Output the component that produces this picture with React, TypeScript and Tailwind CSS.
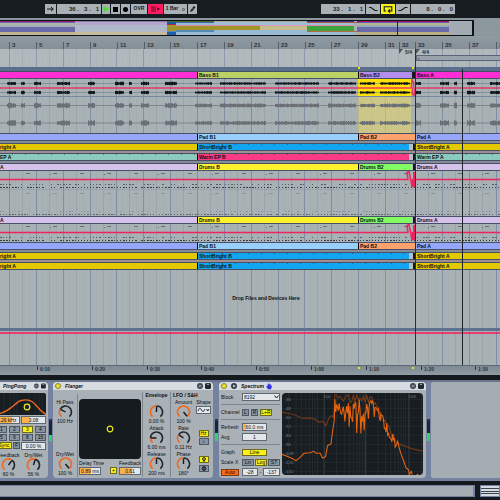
import React from 'react';

const INK = '#11161b';
const HOT = '#f0235f';

interface ClipData {
  name?: string;
  span: number;
  color: string;
  notes?: boolean;
}

// Small seeded generator so the drawn audio is stable between renders
const seeded = (seed: number) => {
  let s = seed;
  return () => {
    s = (s * 16807) % 2147483647;
    return s / 2147483647;
  };
};

/* ---------- Transport ---------- */

const barButton = 'h-2.5 flex items-center justify-center bg-[#a9b1b6] text-[#11161b]';
const barField = 'h-2.5 w-11 bg-[#a9b1b6] text-[#20272c] text-[6px] leading-[10px] font-bold text-right pr-0.5 outline-none';

const Transport: React.FC = () => (
  <header className="flex justify-between bg-[#171c20] px-[45px] pt-1 pb-1">
    <div className="flex gap-px">
      <button aria-label="Follow" className={`${barButton} w-[11px]`}>
        <svg viewBox="0 0 11 10" className="w-[11px] h-2.5" fill="none" stroke={INK}>
          <path d="M2 5h6M6 3l2.3 2L6 7" />
        </svg>
      </button>
      <input aria-label="Song position" className={barField} defaultValue="36 .   3 .   1" />
      <button aria-label="Play" className={`${barButton} w-2`}>
        <svg viewBox="0 0 8 10" className="w-2 h-2.5"><path d="M1.5 2l6 3-6 3z" fill="#46e02c" /></svg>
      </button>
      <button aria-label="Stop" className={`${barButton} w-[9px]`}>
        <span className="w-[5px] h-[5px] bg-black" />
      </button>
      <button aria-label="Record" className={`${barButton} w-[9px]`}>
        <span className="w-[5px] h-[5px] rounded-full bg-black" />
      </button>
      <button className={`${barButton} w-4 text-[5px] font-bold`}>OVR</button>
      <button aria-label="Back to arrangement" className="h-2.5 w-[15px] bg-[#ff1d62]">
        <svg viewBox="0 0 15 10" className="w-[15px] h-2.5">
          <path d="M3 3h5M3 5h5M3 7h5" stroke="#5d0b27" />
          <path d="M9 3.2l3.4 1.8L9 6.8z" fill="#5d0b27" />
        </svg>
      </button>
      <button className={`${barButton} w-[23px] gap-1 text-[5px] font-bold`}>
        1 Bar
        <span className="w-[3px] h-[3px] rounded-full border border-[#4a5258]" />
      </button>
      <button aria-label="Draw" className={`${barButton} w-[9px]`}>
        <svg viewBox="0 0 9 10" className="w-[9px] h-2.5">
          <path d="M2 8l1-2.5L6 2l1.5 1.3L4.5 7z" fill={INK} />
          <path d="M3.8 5.8L5.6 3.8" stroke="#a9b1b6" strokeWidth=".6" />
        </svg>
      </button>
    </div>
    <div className="flex gap-px">
      <input aria-label="Loop start" className={barField} defaultValue="33 .   1 .   1" />
      <button aria-label="Punch in" className={`${barButton} w-3.5`}>
        <svg viewBox="0 0 14 10" className="w-3.5 h-2.5" fill="none" stroke={INK} strokeWidth="1.2">
          <path d="M3 3.5h2l4 3h2.5" />
        </svg>
      </button>
      <button aria-label="Loop" className="h-2.5 w-3.5 bg-[#f8f01c]">
        <svg viewBox="0 0 14 10" className="w-3.5 h-2.5" fill="none" stroke={INK} strokeWidth="1.1">
          <path d="M5 7H3.2V2.8h7.6V7H7.5M9 5.4L7.3 7 9 8.6" />
        </svg>
      </button>
      <button aria-label="Punch out" className={`${barButton} w-3.5`}>
        <svg viewBox="0 0 14 10" className="w-3.5 h-2.5" fill="none" stroke={INK} strokeWidth="1.2">
          <path d="M2.5 6.5h2.5l4-3h2.5" />
        </svg>
      </button>
      <input aria-label="Loop length" className={barField} defaultValue="8 .   0 .   0" />
    </div>
  </header>
);

/* ---------- Overview ---------- */

const overview: { span: number; bands: [number, string][] }[] = [
  { span: 75, bands: [[1, '#8e1f6c'], [1, '#6c65b4'], [2, '#b3b69f'], [2, '#9fb1bb'], [4, '#6a69aa'], [3, '#c1b78f']] },
  { span: 93, bands: [[1, '#8a76a6'], [3, '#b5a6cb'], [6, '#b0b8c9'], [3, '#c4bb9b']] },
  { span: 9, bands: [[1, '#4b6a2e'], [2, '#195ca8'], [1, '#b4224c'], [2, '#a3992f'], [3, '#a39427'], [1, '#5d8bb5'], [3, '#1d5fae']] },
  { span: 38, bands: [[1, '#4b6a2e'], [1, '#3f6aa0'], [2, '#97bbd8'], [1, '#d68ba4'], [3, '#a39427'], [2, '#5687b7'], [3, '#9cbbd6']] },
  { span: 46, bands: [[1, '#a5ad8f'], [3, '#a0bed8'], [1, '#d68ba4'], [3, '#a39427'], [2, '#98b9d4'], [3, '#9cbbd6']] },
  { span: 47, bands: [[1, '#a5ad8f'], [3, '#a0bed8'], [1, '#dd9cae'], [3, '#c5bd8c'], [2, '#98b9d4'], [3, '#9cbbd6']] },
  { span: 47, bands: [[1, '#4b2f8e'], [1, '#a25a43'], [2, '#a0bed8'], [1, '#dd8ca4'], [4, '#3fa33c'], [1, '#b46b45'], [3, '#9cbbd6']] },
  { span: 3, bands: [[1, '#a9b1b6'], [1, '#a25a43'], [7, '#a9b1b6'], [1, '#b46b45'], [3, '#a9b1b6']] },
  { span: 93, bands: [[1, '#a01368'], [1, '#5e5bb0'], [2, '#b9b48f'], [2, '#93aeb0'], [4, '#6a69aa'], [3, '#b9ad82']] },
  { span: 23, bands: [[1, '#a2abb1']] },
];

const Overview: React.FC = () => (
  <div className="flex bg-[#8d989e] pt-0.5">
    <div className="relative flex grow-[474] basis-0 h-4 border-y border-r-2 border-[#0e1216]">
      {overview.map((part, i) => (
        <div key={i} className="flex flex-col min-w-0" style={{ flex: `${part.span} 1 0px` }}>
          {part.bands.map(([size, color], j) => (
            <span key={j} style={{ flex: `${size} 1 0px`, background: color }} />
          ))}
        </div>
      ))}
      <span className="absolute inset-y-0 left-[84%] w-px bg-[#23282e]" />
    </div>
    <div className="grow-[26] basis-0" />
  </div>
);

/* ---------- Rulers ---------- */

const bars: [string, number][] = [
  ['', 9], ['3', 27], ['5', 27], ['7', 27], ['9', 27], ['11', 27], ['13', 26], ['15', 27],
  ['17', 27], ['19', 27], ['21', 27], ['23', 27], ['25', 26], ['27', 27], ['29', 27],
  ['31', 14], ['32', 16], ['33', 27], ['35', 27], ['37', 27], ['39', 4],
];

const BarRuler: React.FC = () => (
  <div className="flex items-end h-[13px] bg-gradient-to-b from-[#909aa1] to-[#848f98] text-[6px] leading-[6px] font-bold text-[#2b333b]">
    {bars.map(([label, span]) => (
      <div key={span + label} className="min-w-0 overflow-hidden whitespace-nowrap" style={{ flex: `${span} 1 0px` }}>
        <span className={`block h-[7px] pl-0.5 ${label ? 'border-l border-[#525e70]' : ''}`}>{label}</span>
      </div>
    ))}
  </div>
);

const times: [string, number][] = [
  ['', 37], ['0:10', 55], ['0:20', 55], ['0:30', 54], ['0:40', 55], ['0:50', 55],
  ['1:00', 55], ['1:10', 55], ['1:20', 54], ['1:30', 25],
];

const TimeRuler: React.FC = () => (
  <div className="relative flex h-2.5 border-t border-[#5d6a76] bg-gradient-to-b from-[#7f8b94] to-[#8f9aa2] text-[5px] leading-[7px] font-bold text-[#2b333b]">
    {times.map(([label, span]) => (
      <div key={label} className="min-w-0 overflow-hidden" style={{ flex: `${span} 1 0px` }}>
        <span className={label ? 'block h-1 border-l border-[#323b45] pl-0.5' : ''}>{label}</span>
      </div>
    ))}
    <span className="absolute top-px left-[71.6%] w-0.5 h-0.5 bg-[#f3e500]" />
    <span className="absolute top-px left-[82.4%] w-0.5 h-0.5 bg-[#f3e500]" />
  </div>
);

/* ---------- Arrangement ---------- */

const majors = [
  ...Array.from({ length: 15 }, (_, i) => 9.5 + Math.round(i * 26.85)),
  415.5, 442.5, 469.5, 496.5,
];

const Grid: React.FC = () => (
  <svg className="absolute inset-0 w-full h-full" viewBox="0 0 500 100" preserveAspectRatio="none">
    {majors.map((x) => (
      <g key={x}>
        <path d={`M${x} 0V100`} stroke="#7482a0" strokeOpacity=".75" />
        <path d={`M${x + 13} 0V100`} stroke="#8b97ab" strokeOpacity=".5" />
        <path d={`M${x + 6} 0V100M${x + 20} 0V100`} stroke="#98a2b0" strokeOpacity=".25" />
      </g>
    ))}
  </svg>
);

const Clips: React.FC<{ clips: ClipData[] }> = ({ clips }) => (
  <div className="flex h-2 border-y border-[#465067]">
    {clips.map((clip, i) => (
      <div
        key={i}
        className="relative min-w-0 overflow-hidden whitespace-nowrap text-[5px] leading-[6px] font-bold text-[#0c0e12]"
        style={{ flex: `${clip.span} 1 0px`, background: clip.color }}
      >
        {clip.notes && (
          <span className="absolute inset-0 bg-[repeating-linear-gradient(90deg,transparent_0px,transparent_12px,#00000060_12px,#00000060_13px)] bg-[length:100%_1px] bg-repeat-x" />
        )}
        <span className={`relative block h-1.5 ${i > 0 && clip.name ? 'border-l border-black pl-px' : ''}`}>{clip.name}</span>
      </div>
    ))}
  </div>
);

const bass: ClipData[] = [
  { span: 197, color: '#ff2dd4' },
  { name: 'Bass B1', span: 161, color: '#bbd065' },
  { name: 'Bass B2', span: 54, color: '#b48eee' },
  { span: 3, color: '#15181d' },
  { name: 'Bass A', span: 85, color: '#ff2dd4' },
];
const pad: ClipData[] = [
  { span: 197, color: '#95a6fb' },
  { name: 'Pad B1', span: 161, color: '#98cffb' },
  { name: 'Pad B2', span: 57, color: '#fda26c' },
  { name: 'Pad A', span: 85, color: '#95a6fb' },
];
const bright: ClipData[] = [
  { name: 'right A', span: 197, color: '#e2c900' },
  { name: 'ShortBright B', span: 212, color: '#12a6f2', notes: true },
  { span: 4, color: '#b9bdc4' },
  { span: 2, color: '#15181d' },
  { name: 'ShortBright A', span: 85, color: '#e2c900' },
];
const warm: ClipData[] = [
  { name: 'EP A', span: 197, color: '#8acbbd', notes: true },
  { name: 'Warm EP B', span: 212, color: '#fb3b83', notes: true },
  { span: 4, color: '#b9bdc4' },
  { span: 2, color: '#15181d' },
  { name: 'Warm EP A', span: 85, color: '#8acbbd', notes: true },
];
const drums: ClipData[] = [
  { name: 'A', span: 197, color: '#d6c1ea' },
  { name: 'Drums B', span: 161, color: '#fdf22c' },
  { name: 'Drums B2', span: 54, color: '#83fb62' },
  { span: 1, color: '#b9bdc4' },
  { span: 2, color: '#15181d' },
  { name: 'Drums A', span: 85, color: '#d6c1ea' },
];

const phrases: [number, number][] = [
  [7, 16], [21, 25], [34, 41], [57, 70], [88, 95], [115, 124], [129, 132], [141, 149], [165, 177],
  [195, 212], [220, 266], [275, 319], [328, 356], [360, 375], [380, 410],
  [416, 421], [440, 449], [454, 457], [467, 475], [490, 500],
];

const wave = (y: number, size: number, seed: number) => {
  const rand = seeded(seed);
  let d = '';
  phrases.forEach(([from, to]) => {
    const scale = from > 190 && from < 412 ? 0.75 : 1;
    for (let x = from; x < to; x++) {
      const h = size * scale * (0.55 + rand() * 0.45);
      d += `M${x + 0.5} ${y - h}V${y + h}`;
    }
  });
  return d;
};

const AudioLanes: React.FC = () => (
  <>
    <svg className="block w-full h-[18px]" viewBox="0 0 500 18" preserveAspectRatio="none">
      <rect x="358" y="0" width="53" height="17" fill="#ffe10a" />
      <path d="M0 4.5H500M0 13.5H500" stroke="#56606a" strokeOpacity=".7" strokeWidth=".6" />
      <path d={wave(4.5, 1.8, 11)} stroke="#10151c" />
      <path d={wave(13.5, 1.8, 23)} stroke="#10151c" />
      <path d="M0 9H411l1-8 2 3-2 10 2 3 1-8H500" fill="none" stroke={HOT} strokeWidth="1.4" strokeOpacity=".85" />
      <path d="M0 17.5H500" stroke="#7787a0" />
    </svg>
    <svg className="block w-full h-9" viewBox="0 0 500 36" preserveAspectRatio="none">
      <rect x="358" y="0" width="53" height="36" fill="#e5d36a" fillOpacity=".6" />
      <path d="M0 8.5H500M0 26H500" stroke="#6b737a" strokeWidth=".7" />
      <path d={wave(8.5, 2.8, 37)} stroke="#6b7075" />
      <path d={wave(26, 2.8, 41)} stroke="#6b7075" />
    </svg>
  </>
);

const noteRow = (y: number, density: number, seed: number) => {
  const rand = seeded(seed);
  let d = '';
  for (let x = 0; x < 500; x += 3) {
    if (rand() < density) d += `M${x} ${y}h${rand() > 0.6 ? 2 : 1}`;
  }
  return d;
};

const hits = Array.from({ length: 19 }, (_, i) => `M${26 + i * 27} 2.5h4M${50 + i * 54} 3.5h1`).join('');

const DrumNotes: React.FC<{ tall?: boolean }> = ({ tall }) => (
  <>
    <svg className="block w-full h-[18px]" viewBox="0 0 500 18" preserveAspectRatio="none">
      <path d={hits} stroke="#555f68" strokeWidth=".8" />
      <path d={noteRow(13.5, 0.55, 51)} stroke="#4d565e" strokeWidth=".9" />
      <path d={noteRow(16.5, 0.95, 67)} stroke="#343c44" />
      <path d="M0 8.5H408l-1-7 2-1 1 5 2 10 2 0V1l1 3V8.5H500" fill="none" stroke={HOT} strokeWidth="1.5" />
      <path d="M412.5 8V16M414 1V16" stroke={HOT} strokeWidth="1.5" />
    </svg>
    {tall && (
      <svg className="block w-full h-[27px]" viewBox="0 0 500 27" preserveAspectRatio="none">
        <path d="M0 .5H500" stroke="#919caa" strokeWidth=".6" />
        <path d={hits} transform="translate(0 2)" stroke="#7f8991" strokeWidth=".7" />
        <path d={noteRow(22.5, 0.5, 73)} stroke="#7f8991" strokeWidth=".7" />
        <path d={noteRow(25.5, 0.95, 79)} stroke="#5c666f" />
      </svg>
    )}
  </>
);

const Gap = ({ tone = 'bg-[#858b97]' }: { tone?: string }) => <div className={`h-0.5 ${tone}`} />;

const Arrangement: React.FC = () => (
  <main className="relative bg-[#a8b1b4]">
    <Grid />
    <div className="relative">
      <div className="flex h-[18px] bg-white/10 text-[5px] leading-[6px] font-bold text-[#252c33]">
        <div className="grow-[399] basis-0" />
        <div className="grow-[17] basis-0 flex min-w-0 gap-px">
          <svg viewBox="0 0 5 5" className="w-[5px] h-[5px]"><path d="M0 5V0h4z" fill="#4d5661" /></svg>
          5/4
        </div>
        <div className="grow-[84] basis-0 min-w-0">
          <div className="flex gap-px h-1.5">
            <svg viewBox="0 0 5 5" className="w-[5px] h-[5px]"><path d="M0 5V0h4z" fill="#4d5661" /></svg>
            4/4
          </div>
          <div className="h-1.5 border-y border-l border-[#59657a] bg-[#98a3ac] leading-[4px] pl-px">›</div>
        </div>
      </div>
      <div className="relative h-1 bg-[#596f8b]">
        <span className="absolute top-0 left-[71.6%] w-0.5 h-0.5 bg-[#f3e500]" />
        <span className="absolute top-0 left-[82.4%] w-0.5 h-0.5 bg-[#f3e500]" />
      </div>
      <Clips clips={bass} />
      <AudioLanes />
      <Clips clips={pad} />
      <Gap />
      <Clips clips={bright} />
      <Gap tone="bg-[#a08f91]" />
      <Clips clips={warm} />
      <Gap />
      <Clips clips={drums} />
      <DrumNotes tall />
      <Clips clips={drums} />
      <DrumNotes />
      <Clips clips={pad} />
      <Gap />
      <Clips clips={bright} />
      <Gap tone="bg-[#a08f91]" />
      <Clips clips={bright} />
      <div className="flex items-center justify-center h-[58px] pl-8 text-[5px] font-bold text-[#0c0e12]">
        <p>Drop Files and Devices Here</p>
      </div>
      <div className="h-[3px] bg-[#5f7390]" />
      <div className="h-[34px] pt-px">
        <div className="h-0.5 bg-[#f0235f]/80" />
      </div>
    </div>
    <span className="absolute top-0 bottom-0 left-[83%] w-px bg-[#2b3038]" />
    <span className="absolute top-5 bottom-0 left-[92.4%] w-px bg-[#1e2329]" />
  </main>
);

/* ---------- Devices ---------- */

const on = 'bg-[#f8f01c] border-[#6e6a1a]';
const off = 'bg-[#8794a0] border-[#4d5966]';
const toggle = 'flex items-center justify-center h-[7px] border text-[5px] leading-[5px] text-[#0c0e12]';
const field = 'h-2 min-w-0 border border-[#5d6873] bg-[#e4e7e9] text-center text-[5px] leading-[6px] text-[#0c0e12] outline-none';

interface KnobProps {
  label: string;
  value: string;
  turn: number;
}

const point = (deg: number, r: number) => {
  const a = ((deg - 90) * Math.PI) / 180;
  return `${(7.5 + r * Math.cos(a)).toFixed(2)} ${(7 + r * Math.sin(a)).toFixed(2)}`;
};

const arc = (from: number, to: number) =>
  `M${point(from, 6)}A6 6 0 ${to - from > 180 ? 1 : 0} 1 ${point(to, 6)}`;

// turn runs from 0 to 1 over 280 degrees
const Knob: React.FC<KnobProps> = ({ label, value, turn }) => {
  const angle = -140 + turn * 280;
  return (
    <label className="relative flex flex-col items-center h-[26px] text-[5px] leading-[6px] text-[#0c0e12] whitespace-nowrap">
      <span className="h-1.5">{label}</span>
      <svg viewBox="0 0 15 13" className="w-[15px] h-[13px]" fill="none" strokeWidth="1.6">
        {turn < 1 && <path d={arc(angle, 140)} stroke="#20262c" />}
        {turn > 0 && <path d={arc(-140, angle)} stroke="#f0671c" />}
        <path d={`M7.5 7L${point(angle, 5.5)}`} stroke="#14191e" strokeWidth="1.4" />
      </svg>
      <span>{value}</span>
      <input type="range" min="0" max="1" step="0.01" defaultValue={turn} className="absolute inset-0 w-full opacity-0" />
    </label>
  );
};

const DeviceHeader: React.FC<{ title: string; spectrum?: boolean; cut?: boolean }> = ({ title, spectrum, cut }) => (
  <div
    className={`flex items-center h-2 gap-1 pr-0.5 rounded-t-sm bg-[#d7dce1] text-[5px] leading-[8px] font-bold italic text-[#0c1014] ${
      cut ? 'pl-[7px]' : 'pl-0.5'
    }`}
  >
    {!cut && (
      <button aria-label={`${title} on`} className="w-1.5 h-1.5 rounded-full border border-[#85832a] bg-[#ece427]" />
    )}
    {spectrum && (
      <svg viewBox="0 0 6 6" className="w-1.5 h-1.5">
        <circle cx="3" cy="3" r="3" fill="#333c46" />
        <path d="M2.2 1.4L4.7 3 2.2 4.6z" fill="#d7dce1" />
      </svg>
    )}
    <h2>{title}</h2>
    {spectrum && (
      <svg viewBox="0 0 6 7" className="w-1.5 h-[7px] -ml-0.5">
        <path d="M1 3l1 1V1.3l.7 2V.6l.9 2.6.5-2.2.5 2.4 1-.6L4.8 6H2.2L.6 3.8z" fill="#2b2be8" stroke="#2b2be8" strokeWidth=".6" />
      </svg>
    )}
    <span className="grow" />
    <svg viewBox="0 0 6 6" className="w-1.5 h-1.5">
      <circle cx="3" cy="3" r="3" fill="#3b444e" />
      <path d="M1.5 4L4.5 2M1.8 2.2l1 .6M3.4 3.6l1 .6" stroke="#cfd5da" strokeWidth=".7" />
    </svg>
    <svg viewBox="0 0 6 6" className="w-1.5 h-1.5 -ml-0.5">
      <rect width="6" height="6" rx="1.5" fill="#20272e" />
      <path d="M2 1.3h2" stroke="#cfd5da" strokeWidth=".9" />
    </svg>
  </div>
);

const Meter: React.FC<{ level: number }> = ({ level }) => (
  <div className="flex flex-col shrink-0 w-[3px] h-[22px] mt-[37px] bg-[#1c2630] border-t-2 border-[#2d3848] justify-end">
    <span className="bg-[#35d46b]" style={{ height: `${level}%` }} />
  </div>
);

const PingPong: React.FC = () => (
  <section className="flex justify-end shrink-0 w-12 h-24 rounded-r-sm overflow-hidden bg-[#a9b1b7]">
    <div className="shrink-0 w-[52px]">
      <DeviceHeader title="PingPong" cut />
      <div className="pt-[3px] pr-0.5">
        <svg viewBox="0 0 50 22" className="block w-full h-[22px] rounded-r-xs bg-[#171d21]">
          <path d="M8 0V22M14 0V22M18 0V22M21 0V22M33 0V22M39 0V22M43 0V22M46 0V22" stroke="#2d353a" strokeWidth=".6" />
          <path d="M0 21C14 20 19 9 25 7.500C29 6.500 33 6.500 36 8.500C41 12 45 20 50 21" fill="none" stroke="#ec6a1f" strokeWidth="1.3" />
          <circle cx="31" cy="14" r="2.800" fill="none" stroke="#f3ec1c" strokeWidth="1.2" />
        </svg>
        <div className="flex justify-between mt-px">
          <input
            aria-label="Filter frequency"
            className={`${field} w-6 bg-linear-to-r from-[#fbb14c] from-70% to-[#e4e7e9] to-70%`}
            defaultValue=".26 kHz"
          />
          <input
            aria-label="Filter width"
            className={`${field} w-[25px] bg-linear-to-r from-[#fbb14c] from-35% to-[#e4e7e9] to-35%`}
            defaultValue="3.08"
          />
        </div>
        <div className="grid grid-cols-4 gap-x-0.5 gap-y-px mt-0.5">
          {['1', '2', '3', '4', '5', '6', '8', '16'].map((beat) => (
            <button key={beat} className={`${toggle} ${beat === '3' ? on : off}`}>{beat}</button>
          ))}
        </div>
        <div className="flex justify-between mt-px">
          <button className={`${toggle} ${on} w-4 h-2`}>Sync</button>
          <button className={`${toggle} ${off} w-[7px] h-2`}>F</button>
          <input aria-label="Delay offset" className={`${field} w-[25px]`} defaultValue="0.00 %" />
        </div>
        <div className="grid grid-cols-2 mt-0.5">
          <Knob label="Feedback" value="60 %" turn={0.63} />
          <Knob label="Dry/Wet" value="56 %" turn={0.56} />
        </div>
      </div>
    </div>
  </section>
);

const Flanger: React.FC = () => (
  <section className="shrink-0 w-40 h-24 rounded-sm bg-[#a9b1b7] text-[5px] leading-[6px] text-[#0c0e12]">
    <DeviceHeader title="Flanger" />
    <div className="flex pt-0.5 pr-0.5">
      <div className="flex flex-col justify-between w-6 pt-[7px]">
        <Knob label="Hi Pass" value="100 Hz" turn={0.28} />
        <Knob label="Dry/Wet" value="100 %" turn={1} />
      </div>
      <div className="w-[65px] mt-0.5 border-l border-[#7b8691] pt-[5px] px-px">
        <div className="flex items-center justify-center h-[60px] rounded-sm bg-[#161b1f]">
          <svg viewBox="0 0 8 8" className="w-2 h-2">
            <circle cx="4" cy="4" r="2.800" fill="none" stroke="#f3ec1c" strokeWidth="1.2" />
          </svg>
        </div>
        <div className="flex justify-between mt-px">
          <label htmlFor="delay-time">Delay Time</label>
          <label htmlFor="flanger-feedback">Feedback</label>
        </div>
        <div className="flex justify-between mt-px">
          <input
            id="delay-time"
            className={`${field} w-[22px] bg-linear-to-r from-[#fbb14c] from-55% to-[#e4e7e9] to-55%`}
            defaultValue="0.89 ms"
          />
          <span className="grow" />
          <button className={`${toggle} ${on} w-[7px] h-2 mr-0.5`}>+</button>
          <input
            id="flanger-feedback"
            className={`${field} w-[22px] bg-linear-to-r from-[#fbb14c] from-60% to-[#e4e7e9] to-60%`}
            defaultValue="0.61"
          />
        </div>
      </div>
      <div className="w-7 border-l border-[#7b8691]">
        <h3 className="h-[7px] text-center font-bold">Envelope</h3>
        <Knob label="" value="0.00 %" turn={0.5} />
        <Knob label="Attack" value="6.00 ms" turn={0.18} />
        <Knob label="Release" value="200 ms" turn={0.5} />
      </div>
      <div className="grow border-l border-[#7b8691]">
        <h3 className="h-[7px] pl-0.5 font-bold">LFO / S&amp;H</h3>
        <div className="flex">
          <div className="w-[25px]">
            <Knob label="Amount" value="100 %" turn={1} />
            <Knob label="Rate" value="0.11 Hz" turn={0.3} />
            <Knob label="Phase" value="180°" turn={0.5} />
          </div>
          <div className="flex flex-col items-center grow">
            <span>Shape</span>
            <button aria-label="Shape" className={`${field} w-[15px] mt-px`}>
              <svg viewBox="0 0 13 6" className="w-[13px] h-1.5" fill="none" stroke={INK} strokeWidth=".9">
                <path d="M1 4C2.500 0 3.500 1 4.500 3S6.500 5 8 2M9.500 2l1.300 2L12 2" />
              </svg>
            </button>
            <button className={`${toggle} ${on} w-2.5 mt-4`}>Hz</button>
            <button className={`${toggle} ${off} w-2.5 mt-px`}>♪</button>
            <button aria-label="Phase" className={`${toggle} ${on} w-2.5 mt-[11px]`}>
              <svg viewBox="0 0 8 5" className="w-2 h-[5px]" fill="none" stroke={INK}>
                <circle cx="4" cy="2" r="1.400" />
                <path d="M4 3v2" />
              </svg>
            </button>
            <button aria-label="Spin" className={`${toggle} ${off} w-2.5 mt-0.5`}>
              <svg viewBox="0 0 8 5" className="w-2 h-[5px]" fill="none" stroke={INK}>
                <circle cx="4" cy="2.500" r="1.800" />
                <path d="M4 .5v4" />
              </svg>
            </button>
          </div>
        </div>
      </div>
    </div>
  </section>
);

// Noisy middle of the analyser curve
const peaks = () => {
  const rand = seeded(97);
  let d = '';
  for (let x = 180; x < 372; x += 2.5) {
    const t = (x - 180) / 192;
    const top = t < 0.6 ? 76 : 76 + (t - 0.6) * 330;
    const depth = t < 0.13 ? 50 : t < 0.5 ? 110 : t < 0.62 ? 60 : 36;
    d += `L${x} ${(top + rand() * depth).toFixed(1)}`;
  }
  return d;
};

const crest = () => {
  const rand = seeded(31);
  let d = '';
  for (let x = 180; x < 368; x += 5) {
    const t = (x - 180) / 188;
    const top = t < 0.6 ? 62 : 68 + (t - 0.6) * 330;
    d += `L${x} ${(top + rand() * 24).toFixed(1)}`;
  }
  return d;
};

const columns = [42, 64, 80, 93, 104, 113, 121, 128, 148, 185, 208, 224, 236, 246, 254, 261, 267, 272, 309, 331, 347, 359, 369, 377, 384, 391, 401, 438];
const levels = ['-36', '-48', '-60', '-72', '-84', '-96', '-108', '-120', '-132'];

const Analyser: React.FC = () => (
  <svg viewBox="22 57 421 246" preserveAspectRatio="none" className="block w-[141px] h-[82px] mt-[3px] rounded-sm bg-[#171d21]">
    {columns.map((x) => (
      <path key={x} d={`M${x} 57V303`} stroke={x === 148 || x === 272 || x === 401 ? '#4a5256' : '#2b3337'} strokeWidth="2" />
    ))}
    {levels.map((level, i) => (
      <g key={level}>
        <path d={`M22 ${76 + i * 27}H443`} stroke="#283034" strokeWidth="2" />
        <text x="30" y={80 + i * 27} fontSize="13" fill="#717b81">{level}</text>
      </g>
    ))}
    <text x="146" y="73" fontSize="13" fill="#717b81">100</text>
    <text x="400" y="73" fontSize="13" fill="#717b81">10K</text>
    <path
      d={`M22 115C50 118 60 122 72 128L82 133L105 132L120 135L132 145L143 142L153 155L162 132L170 124L176 130${crest()}L372 210L390 217L410 224L441 231`}
      fill="none"
      stroke="#7e3c14"
      strokeWidth="3"
    />
    <path
      d={`M22 241L35 246L50 252L64 260L75 251L88 238L105 236L117 232L125 238L136 238L143 252L152 248L158 215L168 210L174 165L178 140${peaks()}L376 236L384 258L392 280L400 288L402 302L408 292L411 302M424 303L429 300`}
      fill="none"
      stroke="#e8640f"
      strokeWidth="3.2"
    />
  </svg>
);

const Spectrum: React.FC = () => (
  <section className="shrink-0 w-[207px] h-24 rounded-sm bg-[#a9b1b7] text-[5px] leading-[6px] text-[#0c0e12]">
    <DeviceHeader title="Spectrum" spectrum />
    <div className="flex justify-between pl-0.5 pr-[3px]">
      <div className="w-[59px]">
        <div className="flex items-center justify-between h-[15px] border-b border-[#7b8691]">
          <label htmlFor="block">Block</label>
          <div className="relative flex">
            <select id="block" className={`${field} appearance-none w-[38px] text-left pl-px`}>
              <option>8192</option>
            </select>
            <svg viewBox="0 0 5 4" className="absolute right-px top-0.5 w-[5px] h-1 pointer-events-none" fill="none" stroke={INK}>
              <path d="M.5 .5L2.500 3L4.500 .5" />
            </svg>
          </div>
        </div>
        <div className="flex items-center h-[15px] gap-0.5 border-b border-[#7b8691]">
          <span className="w-[19px]">Channel</span>
          <button className={`${toggle} ${off} w-[7px]`}>L</button>
          <button className={`${toggle} ${off} w-[7px]`}>R</button>
          <button className={`${toggle} ${on} w-3`}>L+R</button>
        </div>
        <div className="flex flex-col justify-evenly h-[25px] border-b border-[#7b8691]">
          <div className="flex items-center">
            <label htmlFor="refresh" className="w-[21px]">Refresh</label>
            <input
              id="refresh"
              className={`${field} w-[25px] bg-linear-to-r from-[#fbb14c] from-15% to-[#e4e7e9] to-15%`}
              defaultValue="60.0 ms"
            />
          </div>
          <div className="flex items-center">
            <label htmlFor="avg" className="w-[21px]">Avg</label>
            <input id="avg" className={`${field} w-[25px]`} defaultValue="1" />
          </div>
        </div>
        <div className="flex flex-col gap-0.5 pt-[3px]">
          <div className="flex items-center h-2">
            <span className="w-[21px]">Graph</span>
            <button className={`${toggle} ${on} w-[25px]`}>Line</button>
          </div>
          <div className="flex items-center h-2 gap-px">
            <span className="w-5">Scale X</span>
            <button className={`${toggle} ${off} w-3`}>Lin</button>
            <button className={`${toggle} ${on} w-3`}>Log</button>
            <button className={`${toggle} ${off} w-3`}>ST</button>
          </div>
          <div className="flex items-center justify-between h-2">
            <button className={`${toggle} w-[18px] bg-[#ff6a13] border-[#7a3a14]`}>Auto</button>
            <div className="flex items-center justify-between w-[38px]">
              <input aria-label="Range top" className={`${field} w-4 bg-[#a3adb4]`} defaultValue="-28" />
              -
              <input aria-label="Range bottom" className={`${field} w-[17px] bg-[#a3adb4]`} defaultValue="-137" />
            </div>
          </div>
        </div>
      </div>
      <Analyser />
    </div>
  </section>
);

const App: React.FC = () => (
  <div className="min-h-screen overflow-hidden bg-[#14191d] font-['Liberation_Sans',Arial,sans-serif]">
    <Transport />
    <Overview />
    <BarRuler />
    <Arrangement />
    <TimeRuler />
    <div className="flex gap-px h-[101px] mt-[5px] border-t-2 border-[#66748f] bg-[#7482a0]">
      <PingPong />
      <Meter level={32} />
      <Flanger />
      <div className="pl-px"><Meter level={38} /></div>
      <Spectrum />
      <Meter level={42} />
      <div className="grow h-24 rounded-l-xs bg-[#a4adb2]" />
    </div>
    <footer className="flex gap-[5px] pt-1">
      <div className="grow h-3 border-y border-r-2 border-[#7482a0] bg-[#a4adb2]" />
      <div className="flex flex-col justify-evenly w-5 h-3 border border-[#7482a0] bg-[#d5dade]">
        <span className="h-px bg-[#3a444f]" />
        <span className="h-px bg-[#3a444f]" />
        <span className="h-px bg-[#3a444f]" />
      </div>
    </footer>
  </div>
);

export default App;
